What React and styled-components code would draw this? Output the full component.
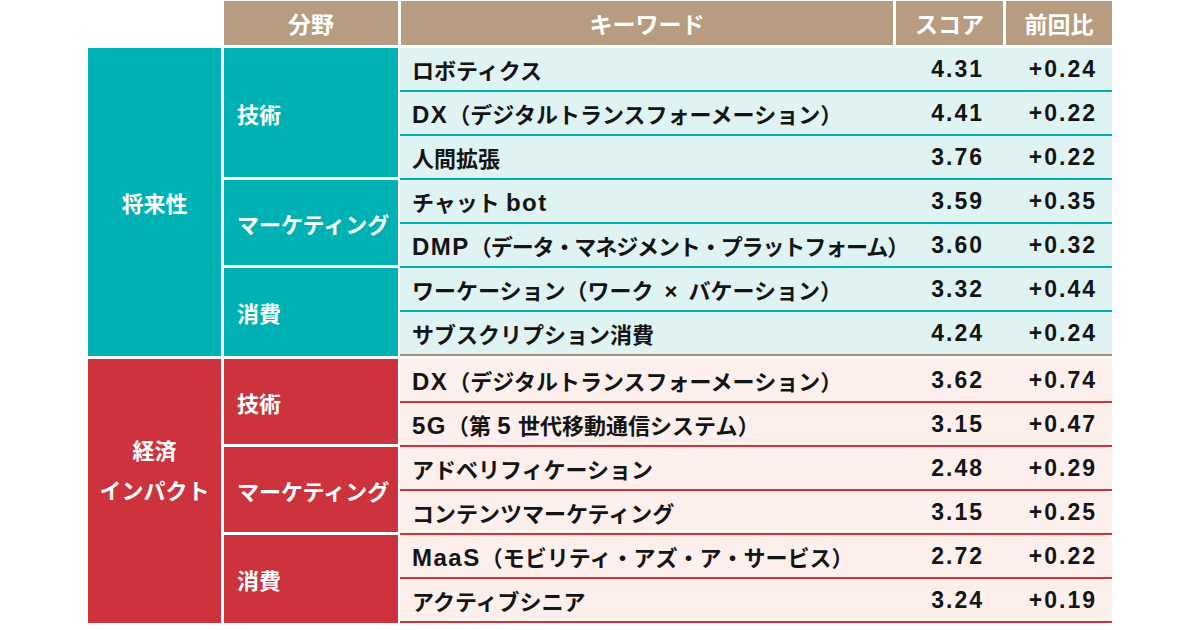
import React from "react";
import styled, { createGlobalStyle } from "styled-components";

const GlobalStyle = createGlobalStyle`
  html, body {
    margin: 0;
    padding: 0;
    background: #ffffff;
  }
  body {
    font-family: "Liberation Sans", "Noto Sans CJK JP", sans-serif;
  }
`;

const palette = {
  teal: { strong: "#00b1b4", light: "#dff3f3", line: "#00b1b4" },
  red: { strong: "#cc333d", light: "#fcefec", line: "#cc333d" }
};

const Page = styled.div`
  width: 1200px;
  height: 630px;
  overflow: hidden;
  box-sizing: border-box;
  padding: 1px 88px 0;
`;

const Table = styled.div`
  width: 1024px;
  display: flex;
  flex-direction: column;
  gap: 3px;
`;

const HeaderRow = styled.div`
  display: grid;
  grid-template-columns: 133px 174px 492px 107px 106px;
  column-gap: 3px;
  height: 44px;
`;

const HeaderCell = styled.div`
  background: ${({ blank }) => (blank ? "transparent" : "#b89c80")};
  color: #ffffff;
  font-family: "Noto Sans CJK JP", sans-serif;
  font-weight: 700;
  font-size: 23px;
  display: flex;
  align-items: center;
  justify-content: center;
`;

const Section = styled.div`
  display: flex;
  gap: 3px;
`;

const CategoryCell = styled.div`
  width: 133px;
  flex-shrink: 0;
  background: ${({ tone }) => palette[tone].strong};
  color: #ffffff;
  font-family: "Noto Sans CJK JP", sans-serif;
  font-weight: 700;
  font-size: 22px;
  line-height: 40px;
  text-align: center;
  display: flex;
  flex-direction: column;
  justify-content: center;
  padding-bottom: ${({ lift }) => (lift ? "44px" : "0")};
  box-sizing: border-box;
`;

const Groups = styled.div`
  flex: 1;
  display: flex;
  flex-direction: column;
`;

const Group = styled.div`
  display: grid;
  grid-template-columns: 174px 1fr;
  column-gap: 2px;
`;

const GroupLabel = styled.div`
  background: ${({ tone }) => palette[tone].strong};
  border-bottom: ${({ last }) => (last ? "none" : "3px solid #ffffff")};
  box-sizing: border-box;
  color: #ffffff;
  font-family: "Noto Sans CJK JP", sans-serif;
  font-weight: 700;
  font-size: 22px;
  padding-left: 13px;
  display: flex;
  align-items: center;
`;

const Rows = styled.div`
  display: flex;
  flex-direction: column;
`;

const Row = styled.div`
  display: grid;
  grid-template-columns: 493px 111px 108px;
  height: 44px;
  box-sizing: border-box;
  background: ${({ tone }) => palette[tone].light};
  border-bottom: 2px solid ${({ tone, edge }) => (edge ? "#b08b6c" : palette[tone].line)};
  color: #141414;
  font-weight: 700;
  align-items: center;
`;

const Keyword = styled.div`
  padding-left: 12px;
  font-size: 22px;
  white-space: nowrap;
  letter-spacing: ${({ squeeze }) => (squeeze ? "-1.1px" : "0")};
`;

const Latin = styled.span`
  font-size: 24px;
  letter-spacing: 1.5px;
`;

const Figure = styled.div`
  text-align: right;
  font-family: "Liberation Sans", Arial, sans-serif;
  font-size: 23px;
  letter-spacing: 2px;
  padding-right: ${({ pad }) => pad}px;
`;

const sections = [
  {
    tone: "teal",
    title: ["将来性"],
    groups: [
      {
        label: "技術",
        rows: [
          ["ロボティクス", "4.31", "+0.24"],
          ["DX（デジタルトランスフォーメーション）", "4.41", "+0.22"],
          ["人間拡張", "3.76", "+0.22"]
        ]
      },
      {
        label: "マーケティング",
        rows: [
          ["チャット bot", "3.59", "+0.35"],
          ["DMP（データ・マネジメント・プラットフォーム）", "3.60", "+0.32", true]
        ]
      },
      {
        label: "消費",
        rows: [
          ["ワーケーション（ワーク\u2002×\u2002バケーション）", "3.32", "+0.44"],
          ["サブスクリプション消費", "4.24", "+0.24"]
        ]
      }
    ]
  },
  {
    tone: "red",
    title: ["経済", "インパクト"],
    groups: [
      {
        label: "技術",
        rows: [
          ["DX（デジタルトランスフォーメーション）", "3.62", "+0.74"],
          ["5G（第 5 世代移動通信システム）", "3.15", "+0.47"]
        ]
      },
      {
        label: "マーケティング",
        rows: [
          ["アドベリフィケーション", "2.48", "+0.29"],
          ["コンテンツマーケティング", "3.15", "+0.25"]
        ]
      },
      {
        label: "消費",
        rows: [
          ["MaaS（モビリティ・アズ・ア・サービス）", "2.72", "+0.22"],
          ["アクティブシニア", "3.24", "+0.19"]
        ]
      }
    ]
  }
];

// latin words are set a touch larger than the kana around them
const renderKeyword = text =>
  text.split(/([A-Za-z0-9]+)/).map((part, i) =>
    /^[A-Za-z0-9]+$/.test(part) ? <Latin key={i}>{part}</Latin> : part
  );

const App = () => (
  <Page>
    <GlobalStyle />
    <Table>
      <HeaderRow>
        <HeaderCell blank />
        <HeaderCell>分野</HeaderCell>
        <HeaderCell>キーワード</HeaderCell>
        <HeaderCell>スコア</HeaderCell>
        <HeaderCell>前回比</HeaderCell>
      </HeaderRow>
      {sections.map((section, si) => (
        <Section key={si}>
          <CategoryCell tone={section.tone} lift={section.title.length > 1}>
            {section.title.map(line => (
              <span key={line}>{line}</span>
            ))}
          </CategoryCell>
          <Groups>
            {section.groups.map((group, gi) => (
              <Group key={gi}>
                <GroupLabel tone={section.tone} last={gi === section.groups.length - 1}>
                  {group.label}
                </GroupLabel>
                <Rows>
                  {group.rows.map((row, ri) => (
                    <Row
                      key={ri}
                      tone={section.tone}
                      edge={
                        si === 0 &&
                        gi === section.groups.length - 1 &&
                        ri === group.rows.length - 1
                      }
                    >
                      <Keyword squeeze={row[3]}>{renderKeyword(row[0])}</Keyword>
                      <Figure pad={20}>{row[1]}</Figure>
                      <Figure pad={15}>{row[2]}</Figure>
                    </Row>
                  ))}
                </Rows>
              </Group>
            ))}
          </Groups>
        </Section>
      ))}
    </Table>
  </Page>
);

export default App;
